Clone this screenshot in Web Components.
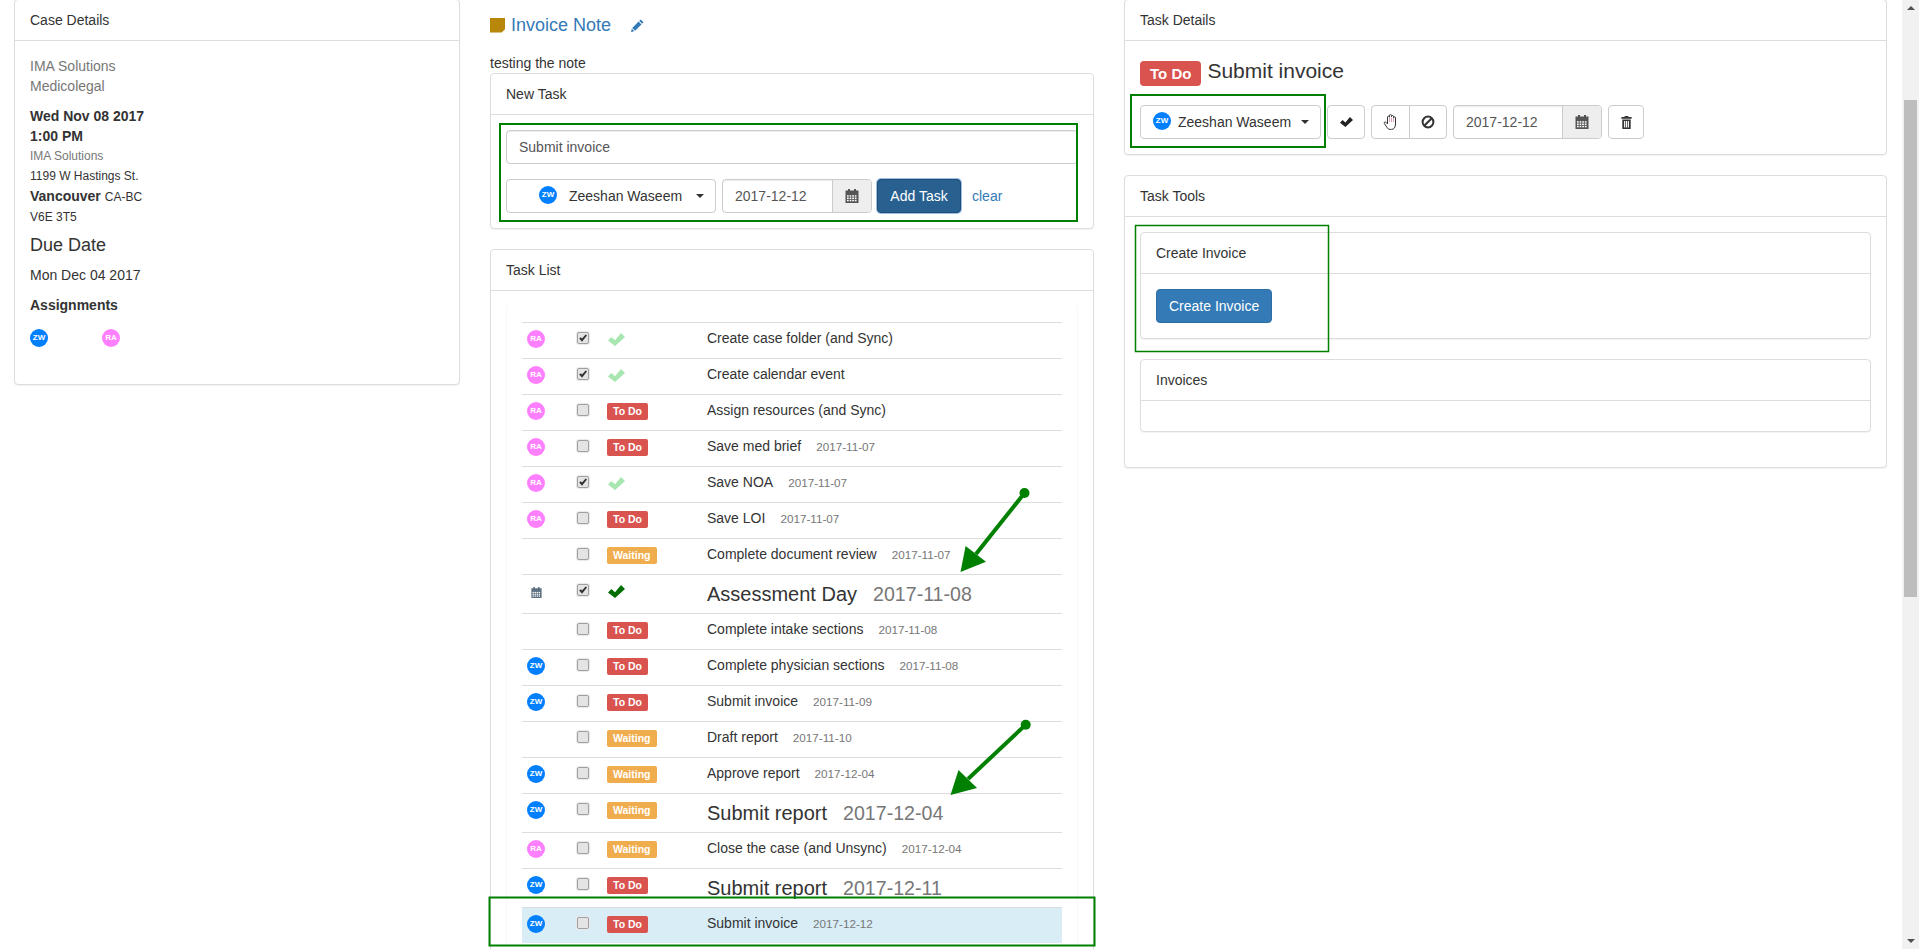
<!DOCTYPE html>
<html>
<head>
<meta charset="utf-8">
<title>Invoice</title>
<style>
    html, body { margin: 0; height: 100%; overflow: hidden; background: #fff; }
    body { font: 14px/20px "Liberation Sans", Arial, sans-serif; color: #333; }
</style>
</head>
<body>
<x-app></x-app>
<script>
// tiny base class, every element just renders css + html in an open shadow root
const comp = (name, css, render) => {
    customElements.define(name, class extends HTMLElement {
        connectedCallback() {
            if (this.shadowRoot) return;
            this.attachShadow({ mode: 'open' });
            this.shadowRoot.innerHTML = `<style>${css}</style>${render(this)}`;
        }
    });
};

const calCells = () => {
    let out = '';
    for (let r = 0; r < 3; r++) {
        for (let c = 0; c < 4; c++) {
            out += `<rect x="${2 + c * 2.6}" y="${6.2 + r * 2.3}" width="1.7" height="1.5" fill="#fff"/>`;
        }
    }
    return out;
};

const icons = {
    check: ['0 0 17 13', '<path d="M0 7.4 3.4 4 7 7.2 13 0 17 4 7 13z"/>'],
    calendar: ['0 0 14 14', `<path d="M3 0h2v1.5h4V0h2v1.5h2.5V14H.5V1.5H3z"/>${calCells()}`],
    trash: ['0 0 14 14', '<path fill-rule="evenodd" d="M5 0h4v1.2h3.5V3h-11V1.2H5zM2.5 3.8h9V14h-9zM4.4 5.3v7h1.2v-7zM6.4 5.3v7h1.2v-7zM8.4 5.3v7h1.2v-7z"/>'],
    ban: ['0 0 14 14', '<circle cx="7" cy="7" r="5.4" fill="none" stroke="currentColor" stroke-width="2"/><path d="M10.8 3.2 3.2 10.8" fill="none" stroke="currentColor" stroke-width="2"/>'],
    hand: ['0 0 15 16', '<path fill="#fff" stroke="currentColor" stroke-width="1" d="M4.5 9V3.2a1 1 0 0 1 2 0V1.6a1 1 0 0 1 2 0v1a1 1 0 0 1 2 0v1.2a1 1 0 0 1 2 0V10c0 3.2-1.5 5.4-4 5.4H7.2c-1.9 0-2.5-.9-3.4-2.3L1.4 9.6c-.7-1.1.7-2.2 1.6-1.3L4.5 10z"/><path fill="none" stroke="#e0a8b0" d="M6.5 4v4M8.5 3.5V8M10.5 4v4"/>'],
    pencil: ['0 0 14 14', '<path d="M10.4.5 13.5 3.6 12 5.1 8.9 2zM8.2 2.7 11.3 5.8 4.4 12.7 1.3 9.6zM.9 10.4 3.6 13.1 0 14z"/>']
};

comp('x-icon', `
    :host { display: inline-flex; line-height: 0; }
    svg { display: block; fill: currentColor; }
`, el => {
    const [box, body] = icons[el.getAttribute('name')];
    const w = el.getAttribute('w') || 14;
    const h = el.getAttribute('h') || w;
    return `<svg width="${w}" height="${h}" viewBox="${box}">${body}</svg>`;
});

comp('x-avatar', `
    :host { display: inline-block; vertical-align: top; width: 18px; height: 18px; border-radius: 50%; color: #fff;
            font-size: 8px; font-weight: bold; line-height: 18px; text-align: center; background: #007fff; }
    :host([who="RA"]) { background: #ff80ff; }
`, el => el.getAttribute('who'));

comp('x-label', `
    :host { display: inline-block; vertical-align: top; padding: 3px 6px; border-radius: 2px; color: #fff; background: #d9534f;
            font-size: 10.5px; font-weight: bold; line-height: 11px; }
    :host([kind="Waiting"]) { background: #f0ad4e; }
    :host([size="lg"]) { padding: 0 10px; font-size: 15px; line-height: 25px; border-radius: 4px; }
`, el => el.getAttribute('kind'));

comp('x-panel', `
    :host { display: block; margin-bottom: 20px; background: #fff; border: 1px solid #ddd; border-radius: 4px;
            box-shadow: 0 1px 1px rgba(0,0,0,.05); }
    .heading { padding: 10px 15px; border-bottom: 1px solid #ddd; }
    .body { padding: 15px; }
`, el => `<div class="heading">${el.getAttribute('heading')}</div><div class="body"><slot></slot></div>`);

comp('x-btn', `
    :host { display: inline-flex; box-sizing: border-box; height: 34px; align-items: center; justify-content: center;
            padding: 0 12px; border: 1px solid #ccc; border-radius: 4px; background: #fff; color: #333; white-space: nowrap; }
    :host([kind="primary"]) { background: #337ab7; border-color: #2e6da4; color: #fff; }
    :host([kind="active"]) { background: #286090; border-color: #204d74; color: #fff; box-shadow: 0 0 0 1px #9dc0e8; }
    :host([pos="left"]) { border-radius: 4px 0 0 4px; }
    :host([pos="right"]) { border-radius: 0 4px 4px 0; margin-left: -1px; }
`, () => '<slot></slot>');

comp('x-user-select', `
    :host { display: flex; box-sizing: border-box; height: 34px; align-items: center; border: 1px solid #ccc;
            border-radius: 4px; background: #fff; padding-left: 12px; white-space: nowrap; }
    :host([wide]) { padding-left: 32px; }
    x-avatar { margin: -2px 7px 0 0; }
    :host([wide]) x-avatar { margin-right: 12px; }
    .caret { width: 0; height: 0; margin-left: 10px; border: 4px solid transparent; border-top-color: #333; border-bottom: 0; }
    :host([wide]) .caret { margin-left: 14px; }
`, el => `<x-avatar who="ZW"></x-avatar><span>${el.getAttribute('name')}</span><span class="caret"></span>`);

comp('x-date', `
    :host { display: flex; box-sizing: border-box; height: 34px; border: 1px solid #ccc; border-radius: 4px;
            background: #fff; color: #555; box-shadow: inset 0 1px 1px rgba(0,0,0,.075); }
    .val { flex: 1; padding: 6px 12px; }
    .addon { width: 39px; box-sizing: border-box; border-left: 1px solid #ccc; background: #eee; border-radius: 0 3px 3px 0;
             display: flex; align-items: center; justify-content: center; }
`, el => `<div class="val">${el.getAttribute('value')}</div><div class="addon"><x-icon name="calendar"></x-icon></div>`);

comp('x-checkbox', `
    :host { display: block; box-sizing: border-box; width: 12px; height: 12px; border: 1px solid #a0a0a0; border-radius: 2px;
            background: #e4e4e4; box-shadow: 0 0 1px 1px #e8e8e8; color: #333; }
    svg { display: block; width: 10px; height: 10px; fill: currentColor; }
`, el => el.hasAttribute('checked') ? '<svg viewBox="0 0 10 10"><path d="M1.2 5.6 2.8 4.2 4 5.6 7.6 1.4 9 2.6 4 8.8z"/></svg>' : '');

comp('x-task-row', `
    :host { display: grid; grid-template-columns: 55px 30px 100px 1fr; height: 36px; box-sizing: border-box;
            border-top: 1px solid #ddd; }
    :host([big]) { height: 39px; }
    :host([active]) { background: #d9edf7; }
    .who { padding: 7px 0 0 5px; }
    .who x-icon { margin: 5px 0 0 4px; color: #5b7083; }
    .box { padding-top: 9px; }
    .status { padding-top: 8px; }
    .status x-icon { margin: 1px 0 0 1px; color: #a8e6b0; }
    :host([big]) .status x-icon { color: #006f00; }
    .text { padding-top: 5px; white-space: nowrap; }
    :host([big]) .text { padding-top: 7px; font-size: 20px; line-height: 24px; }
    small { margin-left: 15px; font-size: 11.7px; color: #777; }
    :host([big]) small { margin-left: 16px; font-size: 19.6px; }
`, el => {
    const a = n => el.getAttribute(n);
    const who = a('who');
    const whoCell = who === 'cal' ? '<x-icon name="calendar" w="11"></x-icon>' : who ? `<x-avatar who="${who}"></x-avatar>` : '';
    const st = a('status');
    const stCell = st === 'done' ? '<x-icon name="check" w="17" h="13"></x-icon>' : `<x-label kind="${st}"></x-label>`;
    return `<div class="who">${whoCell}</div>
        <div class="box"><x-checkbox ${st === 'done' ? 'checked' : ''}></x-checkbox></div>
        <div class="status">${stCell}</div>
        <div class="text">${a('text')}${a('date') ? `<small>${a('date')}</small>` : ''}</div>`;
});

comp('x-case-details', `
    .muted { color: #777; }
    .sm { font-size: 12px; }
    .gap { margin-top: 10px; }
    h4 { margin: 8px 0 10px; font-size: 18px; font-weight: normal; line-height: 20px; }
    .who { display: flex; gap: 54px; margin: 14px 0 22px; height: 18px; }
`, () => `<x-panel heading="Case Details">
    <div class="muted">IMA Solutions</div>
    <div class="muted">Medicolegal</div>
    <div class="gap"><b>Wed Nov 08 2017</b></div>
    <div><b>1:00 PM</b></div>
    <div class="muted sm">IMA Solutions</div>
    <div class="sm">1199 W Hastings St.</div>
    <div><b>Vancouver</b> <span class="sm">CA-BC</span></div>
    <div class="sm">V6E 3T5</div>
    <h4>Due Date</h4>
    <div>Mon Dec 04 2017</div>
    <div class="gap"><b>Assignments</b></div>
    <div class="who"><x-avatar who="ZW"></x-avatar><x-avatar who="RA"></x-avatar></div>
</x-panel>`);

comp('x-invoice-note', `
    :host { display: block; }
    .title { display: flex; align-items: center; height: 20px; padding-top: 16px; margin-bottom: 18px; color: #337ab7; font-size: 18px; }
    .sticky { width: 15px; height: 15px; margin-right: 6px; background: #b8860b;
              clip-path: polygon(0 0, 100% 0, 100% 78%, 78% 100%, 0 100%); }
    x-icon { margin-left: 20px; }
`, () => `<div class="title"><span class="sticky"></span><span>Invoice Note</span><x-icon name="pencil" w="13"></x-icon></div>
    <div>testing the note</div>`);

comp('x-new-task', `
    .input { box-sizing: border-box; height: 34px; padding: 6px 12px; margin-bottom: 15px; border: 1px solid #ccc; border-radius: 4px;
             color: #555; box-shadow: inset 0 1px 1px rgba(0,0,0,.075); }
    .row { display: flex; align-items: center; }
    x-user-select { width: 210px; margin-right: 6px; }
    x-date { width: 150px; margin-right: 5px; }
    x-btn { width: 84px; padding: 0; }
    a { margin-left: 11px; color: #337ab7; }
`, () => `<x-panel heading="New Task">
    <div class="input">Submit invoice</div>
    <div class="row">
        <x-user-select wide name="Zeeshan Waseem"></x-user-select>
        <x-date value="2017-12-12"></x-date>
        <x-btn kind="active">Add Task</x-btn>
        <a>clear</a>
    </div>
</x-panel>`);

const tasks = [
    ['RA', 'done', 'Create case folder (and Sync)', ''],
    ['RA', 'done', 'Create calendar event', ''],
    ['RA', 'To Do', 'Assign resources (and Sync)', ''],
    ['RA', 'To Do', 'Save med brief', '2017-11-07'],
    ['RA', 'done', 'Save NOA', '2017-11-07'],
    ['RA', 'To Do', 'Save LOI', '2017-11-07'],
    ['', 'Waiting', 'Complete document review', '2017-11-07'],
    ['cal', 'done', 'Assessment Day', '2017-11-08', 'big'],
    ['', 'To Do', 'Complete intake sections', '2017-11-08'],
    ['ZW', 'To Do', 'Complete physician sections', '2017-11-08'],
    ['ZW', 'To Do', 'Submit invoice', '2017-11-09'],
    ['', 'Waiting', 'Draft report', '2017-11-10'],
    ['ZW', 'Waiting', 'Approve report', '2017-12-04'],
    ['ZW', 'Waiting', 'Submit report', '2017-12-04', 'big'],
    ['RA', 'Waiting', 'Close the case (and Unsync)', '2017-12-04'],
    ['ZW', 'To Do', 'Submit report', '2017-12-11', 'big'],
    ['ZW', 'To Do', 'Submit invoice', '2017-12-12', 'active']
];

comp('x-task-list', `
    .inner { padding: 16px 15px 0; border: 1px solid #f8f8f8; border-width: 0 1px; }
`, () => `<x-panel heading="Task List"><div class="inner">${tasks.map(([who, status, text, date, flag]) =>
    `<x-task-row who="${who}" status="${status}" text="${text}" date="${date}" ${flag || ''}></x-task-row>`).join('')}</div></x-panel>`);

comp('x-task-details', `
    .title { display: flex; align-items: flex-start; height: 30px; margin-bottom: 19px; font-size: 21px; line-height: 30px; }
    x-label { margin: 5px 6px 0 0; }
    .row { display: flex; gap: 6px; }
    x-user-select { width: 181px; }
    x-btn { width: 39px; padding: 0; }
    .group { display: flex; }
    .trash { width: 36px; }
    x-date { width: 149px; }
    .chk { width: 38px; color: #222; }
    .ban { width: 38px; }
`, () => `<x-panel heading="Task Details">
    <div class="title"><x-label kind="To Do" size="lg"></x-label><span>Submit invoice</span></div>
    <div class="row">
        <x-user-select name="Zeeshan Waseem"></x-user-select>
        <x-btn class="chk"><x-icon name="check" w="13" h="10"></x-icon></x-btn>
        <div class="group">
            <x-btn pos="left"><x-icon name="hand" w="15" h="16"></x-icon></x-btn>
            <x-btn pos="right" class="ban"><x-icon name="ban" w="14"></x-icon></x-btn>
        </div>
        <x-date value="2017-12-12"></x-date>
        <x-btn class="trash"><x-icon name="trash" w="13"></x-icon></x-btn>
    </div>
</x-panel>`);

comp('x-task-tools', `
    x-btn { padding: 0 12px; }
    .empty { height: 0; }
`, () => `<x-panel heading="Task Tools">
    <x-panel heading="Create Invoice"><x-btn kind="primary">Create Invoice</x-btn></x-panel>
    <x-panel heading="Invoices"><div class="empty"></div></x-panel>
</x-panel>`);

comp('x-scrollbar', `
    :host { display: block; position: relative; width: 17px; height: 100%; background: #f1f1f1; flex: none; }
    .thumb { position: absolute; left: 2px; top: 100px; width: 13px; height: 497px; background: #bdbdbd; }
    .up, .down { position: absolute; left: 5px; width: 0; height: 0; border: 4px solid transparent; }
    .up { top: 6px; border-top: 0; border-bottom-color: #505050; }
    .down { bottom: 6px; border-bottom: 0; border-top-color: #505050; }
`, () => '<div class="up"></div><div class="thumb"></div><div class="down"></div>');

// the green marks somebody drew on the screenshot
comp('x-annotations', `
    :host { position: absolute; left: 0; top: 0; pointer-events: none; }
    svg { display: block; }
    rect { fill: none; stroke: #008000; stroke-width: 2; }
    .thin { stroke-width: 1.5; }
    .arrow { fill: #008000; }
    line { stroke: #008000; stroke-width: 4; }
`, () => `<svg width="1919" height="949">
    <rect x="500" y="124" width="577" height="97"/>
    <rect x="1131" y="95" width="194" height="52"/>
    <rect class="thin" x="1135.5" y="225.5" width="193" height="126"/>
    <rect x="489.5" y="897.5" width="605" height="48"/>
    <line x1="1024.5" y1="493" x2="976" y2="554"/>
    <circle class="arrow" cx="1024.5" cy="493" r="5"/>
    <polygon class="arrow" points="960.5,572 965.6,546 986,561.7"/>
    <line x1="1025.7" y1="724.7" x2="968" y2="779"/>
    <circle class="arrow" cx="1025.7" cy="724.7" r="5"/>
    <polygon class="arrow" points="950.5,795 958.5,770 977,788"/>
</svg>`);

comp('x-app', `
    :host { display: flex; position: relative; height: 949px; overflow: hidden; }
    .page { flex: 1; min-width: 0; display: grid; grid-template-columns: 475px 634px 793px; align-items: start; }
    .col { box-sizing: border-box; padding: 0 15px; margin-top: -1px; min-width: 0; }
    .col:first-child { padding-left: 14px; }
`, () => `<div class="page">
    <div class="col"><x-case-details></x-case-details></div>
    <div class="col"><x-invoice-note></x-invoice-note><x-new-task></x-new-task><x-task-list></x-task-list></div>
    <div class="col"><x-task-details></x-task-details><x-task-tools></x-task-tools></div>
</div>
<x-scrollbar></x-scrollbar>
<x-annotations></x-annotations>`);
</script>
</body>
</html>
